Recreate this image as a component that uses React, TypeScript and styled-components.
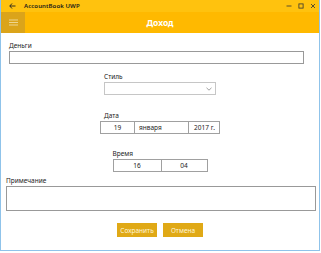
import React from "react";
import styled, { createGlobalStyle } from "styled-components";

const Global = createGlobalStyle`
  html, body { margin: 0; padding: 0; background: #ffffff; }
  body { font-family: "Noto Sans", "Open Sans", "Liberation Sans", sans-serif; }
  * { box-sizing: border-box; }
`;

const Win = styled.div`
  width: 320px;
  height: 251px;
  display: flex;
  flex-direction: column;
  border-left: 1px solid #8fc3ea;
  border-right: 1px solid #8fc3ea;
  border-bottom: 1px solid #8fc3ea;
  background: #ffffff;
  overflow: hidden;
`;

const TitleBar = styled.div`
  height: 12px;
  background: #ffc20e;
  display: flex;
  align-items: center;
  color: #1a1a1a;
  font-size: 6px;
  font-weight: 600;
`;

const BackBtn = styled.div`
  width: 23px;
  display: flex;
  justify-content: center;
  align-items: center;
`;

const TitleText = styled.div`
  flex: 1;
  letter-spacing: 0.1px;
`;

const Caption = styled.div`
  width: 12px;
  display: flex;
  justify-content: center;
  align-items: center;
`;

const Header = styled.div`
  height: 21px;
  background: #ffb900;
  display: flex;
  align-items: stretch;
`;

const Burger = styled.div`
  width: 24px;
  background: #dba41a;
  display: flex;
  align-items: center;
  justify-content: center;
`;

const HeaderTitle = styled.div`
  flex: 1;
  display: flex;
  align-items: center;
  justify-content: center;
  color: #ffffff;
  font-weight: 700;
  font-size: 8.5px;
  padding-right: 24px;
`;

const Content = styled.div`
  flex: 1;
  display: flex;
  flex-direction: column;
  padding: 8px 4px 0 4px;
`;

const Field = styled.div<{ $w: number; $ml?: number; $mt: number; $center?: boolean }>`
  width: ${(p) => p.$w}px;
  margin-top: ${(p) => p.$mt}px;
  margin-left: ${(p) => (p.$center ? "auto" : `${p.$ml ?? 0}px`)};
  margin-right: ${(p) => (p.$center ? "auto" : "0")};
  display: flex;
  flex-direction: column;
`;

const Label = styled.div<{ $indent?: number }>`
  font-size: 6.5px;
  color: #222;
  height: 9px;
  line-height: 9px;
  margin-bottom: 1px;
  padding-left: ${(p) => p.$indent ?? 0}px;
`;

const TextBox = styled.div<{ $h: number }>`
  height: ${(p) => p.$h}px;
  border: 1px solid #999999;
  background: #fff;
`;

const Select = styled.div`
  height: 13px;
  border: 1px solid #c6c6c6;
  display: flex;
  justify-content: flex-end;
  align-items: center;
  padding-right: 3px;
`;

const Picker = styled.div<{ $cols: string }>`
  height: 13px;
  border: 1px solid #a0a0a0;
  display: grid;
  grid-template-columns: ${(p) => p.$cols};
`;

const Cell = styled.div<{ $align?: string }>`
  display: flex;
  align-items: center;
  justify-content: ${(p) => p.$align ?? "center"};
  font-size: 6.5px;
  color: #222;
  padding: 0 4px;
  border-left: 1px solid #a0a0a0;
  &:first-child { border-left: none; }
`;

const Buttons = styled.div`
  display: flex;
  justify-content: center;
  gap: 6px;
  margin-top: 12px;
`;

const Btn = styled.div`
  width: 40px;
  height: 14px;
  background: #e0a916;
  color: #fff6d8;
  font-size: 6.5px;
  display: flex;
  align-items: center;
  justify-content: center;
`;

export default function App() {
  return (
    <>
      <Global />
      <Win>
        <TitleBar>
          <BackBtn>
            <svg width="7" height="6" viewBox="0 0 7 6">
              <path d="M3 0.5 L0.8 3 L3 5.5 M0.8 3 H6.5" stroke="#222" strokeWidth="0.9" fill="none" />
            </svg>
          </BackBtn>
          <TitleText>AccountBook UWP</TitleText>
          <Caption>
            <svg width="6" height="6" viewBox="0 0 6 6">
              <path d="M0.5 3 H5.5" stroke="#333" strokeWidth="0.8" />
            </svg>
          </Caption>
          <Caption>
            <svg width="6" height="6" viewBox="0 0 6 6">
              <rect x="0.9" y="0.9" width="4.2" height="4.2" stroke="#333" strokeWidth="0.8" fill="none" />
            </svg>
          </Caption>
          <Caption>
            <svg width="6" height="6" viewBox="0 0 6 6">
              <path d="M1 1 L5 5 M5 1 L1 5" stroke="#333" strokeWidth="0.8" />
            </svg>
          </Caption>
        </TitleBar>
        <Header>
          <Burger>
            <svg width="9" height="7" viewBox="0 0 9 7">
              <path d="M0 1 H9 M0 3.5 H9 M0 6 H9" stroke="#f3e2b0" strokeWidth="0.8" />
            </svg>
          </Burger>
          <HeaderTitle>Доход</HeaderTitle>
        </Header>
        <Content>
          <Field $w={295} $ml={4} $mt={0}>
            <Label>Деньги</Label>
            <TextBox $h={13} />
          </Field>
          <Field $w={112} $center $mt={8}>
            <Label>Стиль</Label>
            <Select>
              <svg width="6" height="4" viewBox="0 0 6 4">
                <path d="M0.5 0.8 L3 3.2 L5.5 0.8" stroke="#777" strokeWidth="0.7" fill="none" />
              </svg>
            </Select>
          </Field>
          <Field $w={120} $center $mt={16}>
            <Label $indent={4}>Дата</Label>
            <Picker $cols="33px 54px 1fr">
              <Cell>19</Cell>
              <Cell $align="flex-start">января</Cell>
              <Cell $align="flex-end">2017 г.</Cell>
            </Picker>
          </Field>
          <Field $w={95} $center $mt={15}>
            <Label>Время</Label>
            <Picker $cols="47px 1fr">
              <Cell>16</Cell>
              <Cell>04</Cell>
            </Picker>
          </Field>
          <Field $w={310} $ml={1} $mt={4}>
            <Label>Примечание</Label>
            <TextBox $h={25} />
          </Field>
          <Buttons>
            <Btn>Сохранить</Btn>
            <Btn>Отмена</Btn>
          </Buttons>
        </Content>
      </Win>
    </>
  );
}
